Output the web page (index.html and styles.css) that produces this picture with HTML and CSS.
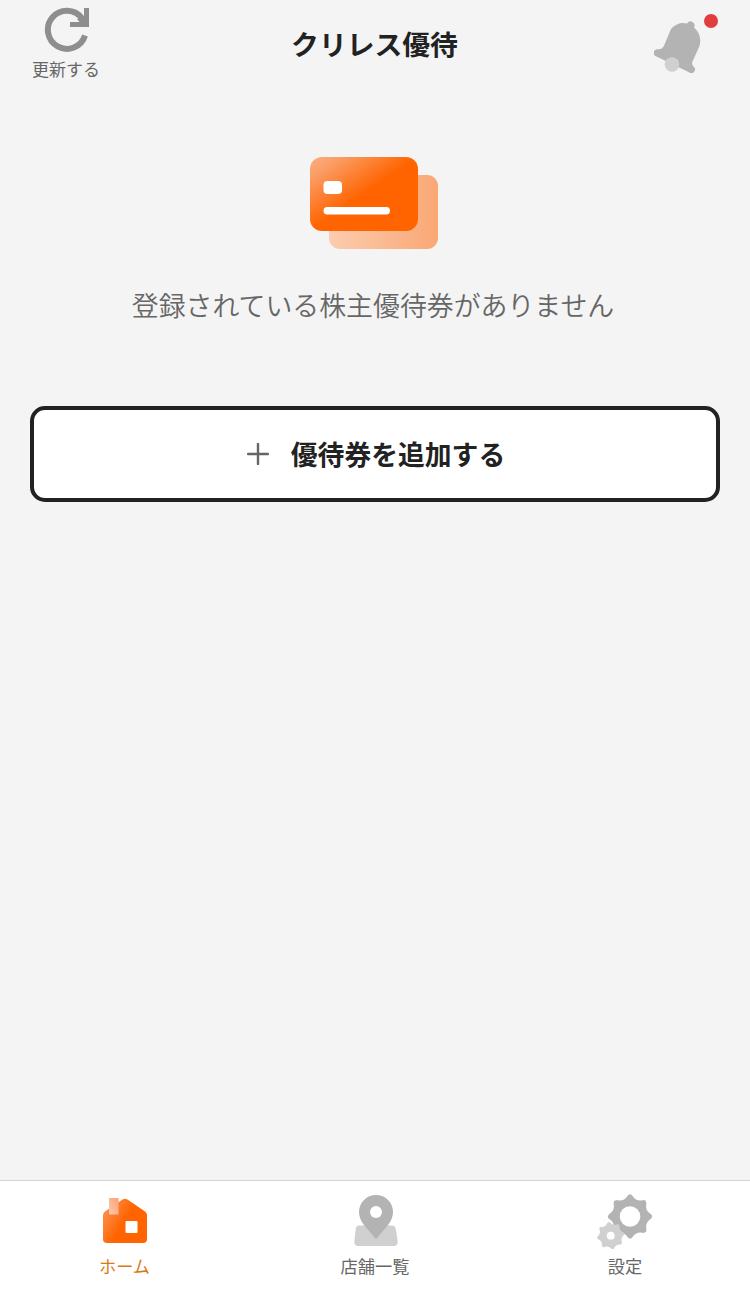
FILE: index.html
```html
<!DOCTYPE html>
<html lang="ja">
<head>
  <meta charset="UTF-8">
  <title>クリレス優待</title>
  <link rel="stylesheet" href="styles.css">
</head>
<body>

  <header class="header">
    <button class="reload">
      <svg width="48" height="46" viewBox="0 0 48 46">
        <path d="M43 28.500 A19 19 0 1 1 40 11.300" fill="none" stroke="#8e8e8e" stroke-width="6"/>
        <path d="M42 1h5v19H28v-5h9.500L35 12l7-3z" fill="#8e8e8e"/>
      </svg>
      <span>更新する</span>
    </button>
    <h1>クリレス優待</h1>
    <button class="bell">
      <svg width="50" height="54" viewBox="0 0 50 54">
        <path d="M17 10C22 4 29 3 33 4.500A3.800 3.800 0 0 1 40 8.500C45.500 13 47.500 20 45.500 27L38.500 42.500Q37.500 45.500 39.500 47.500A3.500 3.500 0 0 1 35 53.300L2.500 37.500A3.700 3.700 0 0 1 3.500 30.200Q8 31 10.300 26Z" fill="#b3b3b3"/>
        <circle cx="18" cy="45.500" r="7.300" fill="#d0d0d0"/>
      </svg>
      <span class="dot"></span>
    </button>
  </header>

  <main class="main">
    <svg class="cards" width="130" height="94" viewBox="0 0 130 94">
      <defs>
        <linearGradient id="front" x1="0" y1="0" x2="1" y2="1">
          <stop offset="0" stop-color="#faae80"/>
          <stop offset=".12" stop-color="#fba06b"/>
          <stop offset=".5" stop-color="#ff6400"/>
        </linearGradient>
        <linearGradient id="back" x1="0" y1="0" x2="1" y2="0">
          <stop offset="0" stop-color="#fbcdb0"/>
          <stop offset="1" stop-color="#faa774"/>
        </linearGradient>
      </defs>
      <rect x="20" y="19" width="109" height="74" rx="11" fill="url(#back)"/>
      <rect x="1" y="1" width="108" height="74" rx="12" fill="url(#front)"/>
      <rect x="14.500" y="25" width="18.500" height="13" rx="4" fill="#fff"/>
      <rect x="14.500" y="51" width="66.500" height="7.500" rx="3.700" fill="#fff"/>
    </svg>
    <p class="message">登録されている株主優待券がありません</p>
    <button class="add">
      <svg width="22" height="22" viewBox="0 0 22 22">
        <path d="M11 1v20M1 11h20" stroke="#666" stroke-width="2.400" stroke-linecap="round"/>
      </svg>
      <span>優待券を追加する</span>
    </button>
  </main>

  <nav class="tabs">
    <a class="tab active">
      <svg width="60" height="60" viewBox="0 0 60 60">
        <defs>
          <linearGradient id="house" x1="0" y1=".2" x2="1" y2=".8">
            <stop offset="0" stop-color="#fc9455"/>
            <stop offset=".5" stop-color="#ff6400"/>
          </linearGradient>
          <linearGradient id="chimney" x1="0" y1="1" x2="1" y2="0">
            <stop offset="0" stop-color="#fcc9ac"/>
            <stop offset="1" stop-color="#faa273"/>
          </linearGradient>
        </defs>
        <path d="M10 22.500L27.500 10.500Q30 9 32.500 10.500L50 22.500Q52 24 52 26V50Q52 54 48 54H12Q8 54 8 50V26Q8 24 10 22.500Z" fill="url(#house)"/>
        <rect x="14" y="9" width="9.500" height="16.500" fill="url(#chimney)"/>
        <rect x="30.500" y="32" width="12" height="12" rx="1" fill="#fff"/>
      </svg>
      <span>ホーム</span>
    </a>
    <a class="tab">
      <svg width="60" height="60" viewBox="0 0 60 60">
        <path d="M14 36.500H47Q50 36.500 50.700 39.500L52.700 52Q53 57 49 57H13Q9 57 9.300 52L10.800 39.500Q11.200 36.500 14 36.500Z" fill="#d0d0d0"/>
        <path d="M31 50L19 36Q14 29.500 14 23A17 17 0 0 1 48 23Q48 29.500 43 36Z" fill="#b3b3b3"/>
        <circle cx="31" cy="23" r="6" fill="#fff"/>
      </svg>
      <span>店舗一覧</span>
    </a>
    <a class="tab">
      <svg width="60" height="60" viewBox="0 0 60 60">
        <defs>
          <path id="gear" d="M0-19Q4.800-11.500 13.400-13.400Q11.500-4.800 19 0Q11.500 4.800 13.400 13.400Q4.800 11.500 0 19Q-4.800 11.500-13.400 13.400Q-11.500 4.800-19 0Q-11.500-4.800-13.400-13.400Q-4.800-11.500 0-19Z" stroke-width="6" stroke-linejoin="round"/>
        </defs>
        <use href="#gear" transform="translate(35 27.500)" fill="#b3b3b3" stroke="#b3b3b3"/>
        <circle cx="35" cy="27.500" r="10.300" fill="#fff"/>
        <use href="#gear" transform="translate(15.700 46.700) rotate(-9) scale(.62)" fill="#d0d0d0" stroke="#d0d0d0"/>
        <circle cx="15.700" cy="46.700" r="3.900" fill="#fff"/>
      </svg>
      <span>設定</span>
    </a>
  </nav>

</body>
</html>
```
FILE: styles.css
```css
* {
  box-sizing: border-box;
}
body {
  margin: 0;
  height: 1295px;
  display: flex;
  flex-direction: column;
  background: #f4f4f4;
  color: #222;
  font-family: "Noto Sans CJK JP", sans-serif;
}
button {
  border: 0;
  padding: 0;
  background: none;
  font-family: inherit;
  color: inherit;
}
svg {
  display: block;
}
.header {
  height: 90px;
  padding: 0 30px;
  display: flex;
  justify-content: space-between;
}
.header h1 {
  margin: 0;
  padding-right: 1px;
  font-size: 27.8px;
  font-weight: 700;
  line-height: 87px;
}
.reload {
  width: 72px;
  padding-top: 7px;
  display: flex;
  flex-direction: column;
  align-items: center;
  font-size: 17px;
  line-height: 24px;
  color: #666;
}
.reload span {
  margin-top: 4px;
}
.bell {
  position: relative;
  width: 72px;
  padding: 19px 0 0 6px;
  display: flex;
}
.dot {
  position: absolute;
  top: 14px;
  right: 2px;
  width: 14px;
  height: 14px;
  border-radius: 50%;
  background: #e03e3e;
}
.main {
  flex: 1;
  padding: 66px 30px 0;
  display: flex;
  flex-direction: column;
  align-items: center;
}
.cards {
  margin-right: 2px;
}
.message {
  margin: 35px 0 0;
  padding-right: 4px;
  font-size: 26.9px;
  font-weight: 350;
  line-height: 40px;
  color: #666;
}
.add {
  width: 690px;
  height: 96px;
  margin-top: 81px;
  padding-left: 2px;
  display: flex;
  align-items: center;
  justify-content: center;
  gap: 22px;
  background: #fff;
  border: 4px solid #222;
  border-radius: 15px;
  font-size: 26.8px;
  font-weight: 700;
}
.add span {
  margin-bottom: 2px;
}
.tabs {
  height: 115px;
  display: flex;
  background: #fff;
  border-top: 1px solid #d4d4d4;
}
.tab {
  width: 250px;
  padding-top: 8px;
  display: flex;
  flex-direction: column;
  align-items: center;
  font-size: 17.2px;
  line-height: 24px;
  color: #666;
}
.tab span {
  margin-top: 5px;
}
.tab.active {
  padding-right: 1px;
  color: #dc7814;
}
```
